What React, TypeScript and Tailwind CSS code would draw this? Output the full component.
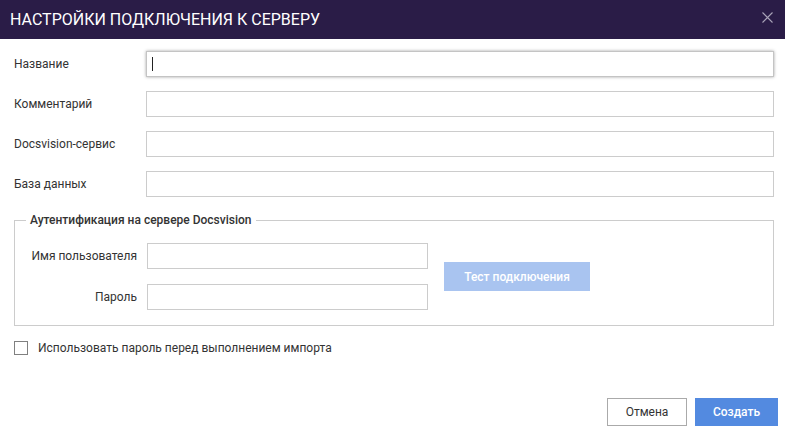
import React from "react";

const font = { fontFamily: "Roboto, 'Liberation Sans', sans-serif" };

function Row({ label, focused }: { label: string; focused?: boolean }) {
  return (
    <div className="flex items-center h-[26px]">
      <div className="w-[132px] shrink-0 text-[12px] text-[#333]">{label}</div>
      <div
        className={
          "flex-1 h-[26px] border bg-white flex items-center " +
          (focused
            ? "border-[#c4c4c4] shadow-[0_0_3px_rgba(0,0,0,0.35)]"
            : "border-[#cccccc]")
        }
      >
        {focused && <div className="ml-[5px] w-px h-[14px] bg-[#222]" />}
      </div>
    </div>
  );
}

export default function App() {
  return (
    <div className="w-[785px] h-[434px] bg-white flex flex-col" style={font}>
      <div className="h-[39px] bg-[#2a1c47] flex items-center justify-between pl-[10px] pr-[12px] shrink-0">
        <div className="text-white text-[16px]">НАСТРОЙКИ ПОДКЛЮЧЕНИЯ К СЕРВЕРУ</div>
        <svg width="11" height="11" viewBox="0 0 11 11" className="mt-[-4px]">
          <path d="M0.5 0.5 L10.5 10.5 M10.5 0.5 L0.5 10.5" stroke="#a9a3b8" strokeWidth="1.1" />
        </svg>
      </div>
      <div className="flex flex-col pl-[14px] pr-[11px] pt-[12px] gap-[14px]">
        <Row label="Название" focused />
        <Row label="Комментарий" />
        <Row label="Docsvision-сервис" />
        <Row label="База данных" />
      </div>
      <fieldset className="ml-[14px] mr-[11px] mt-[14px] border border-[#cccccc] pb-[15px] pt-[14px]">
        <legend className="ml-[11px] px-[4px] text-[12px] font-medium text-[#333]">
          Аутентификация на сервере Docsvision
        </legend>
        <div className="flex items-center pl-[14px]">
          <div className="flex flex-col gap-[15px]">
            <div className="flex items-center">
              <div className="w-[118px] pr-[10px] text-right text-[12px] text-[#333]">Имя пользователя</div>
              <div className="w-[281px] h-[26px] border border-[#cccccc]" />
            </div>
            <div className="flex items-center">
              <div className="w-[118px] pr-[10px] text-right text-[12px] text-[#333]">Пароль</div>
              <div className="w-[281px] h-[26px] border border-[#cccccc]" />
            </div>
          </div>
          <div className="ml-[16px] w-[146px] h-[29px] bg-[#a9c4f0] text-white text-[12px] font-medium flex items-center justify-center">
            Тест подключения
          </div>
        </div>
      </fieldset>
      <div className="flex items-center mt-[15px] ml-[14px] h-[14px]">
        <div className="w-[14px] h-[14px] border border-[#808080] bg-white" />
        <div className="ml-[10px] text-[12px] text-[#333]">Использовать пароль перед выполнением импорта</div>
      </div>
      <div className="flex justify-end mt-[43px] pr-[7px] gap-[8px]">
        <div className="w-[80px] h-[28px] border border-[#aaaaaa] text-[12px] text-[#333] flex items-center justify-center">
          Отмена
        </div>
        <div className="w-[83px] h-[28px] bg-[#538ae0] text-white text-[12px] font-medium flex items-center justify-center">
          Создать
        </div>
      </div>
    </div>
  );
}
